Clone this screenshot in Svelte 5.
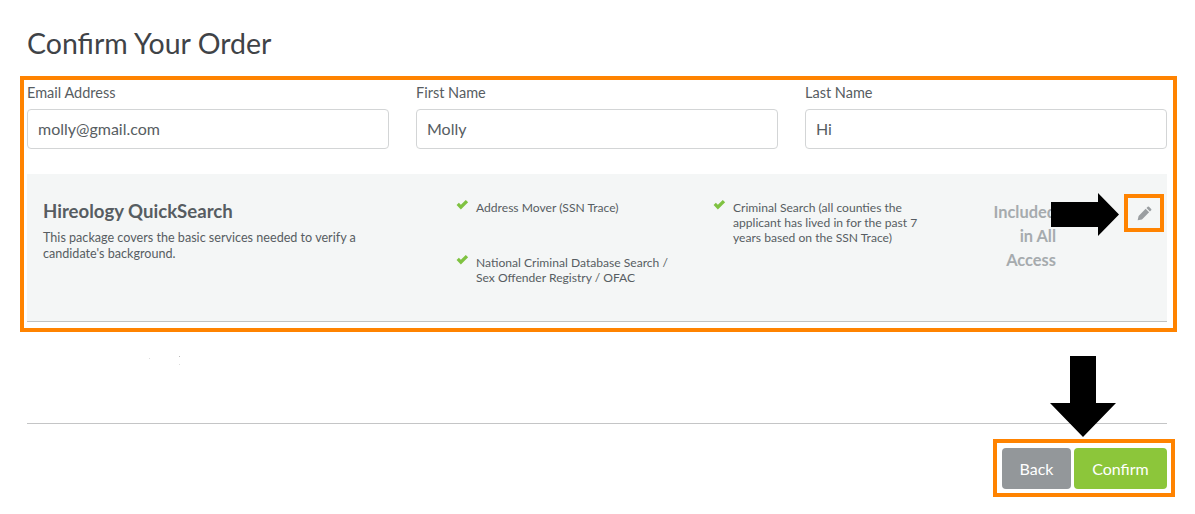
<script>
    let fields = [
        { label: "Email Address", value: "molly@gmail.com" },
        { label: "First Name", value: "Molly" },
        { label: "Last Name", value: "Hi" }
    ]
    let col1 = ["Address Mover (SSN Trace)", "National Criminal Database Search / Sex Offender Registry / OFAC"]
    let col2 = ["Criminal Search (all counties the applicant has lived in for the past 7 years based on the SSN Trace)"]
</script>

{#snippet check()}
    <svg class="check" viewBox="0 0 14 11" width="13" height="10" aria-hidden="true">
        <path d="M0.5 5.4 L3 2.9 L5.2 5.1 L10.6 0 L13.2 2.5 L5.2 10.4 Z" fill="#7fc241" />
    </svg>
{/snippet}

<div class="page">
    <h1>Confirm Your Order</h1>

    <div class="highlight">
        <div class="fields">
            {#each fields as field}
                <label class="field">
                    <span>{field.label}</span>
                    <input type="text" value={field.value} />
                </label>
            {/each}
        </div>

        <div class="package">
            <div class="intro">
                <h2>Hireology QuickSearch</h2>
                <p>This package covers the basic services needed to verify a candidate's background.</p>
            </div>
            <ul class="services first">
                {#each col1 as item}
                    <li>{@render check()}<span>{item}</span></li>
                {/each}
            </ul>
            <ul class="services second">
                {#each col2 as item}
                    <li>{@render check()}<span>{item}</span></li>
                {/each}
            </ul>
            <div class="included">Included in All Access</div>
            <button class="edit" aria-label="Edit">
                <svg viewBox="0 0 16 16" width="15" height="15" aria-hidden="true">
                    <path d="M11.4 0.9 a1 1 0 0 1 1.4 0 l2.3 2.3 a1 1 0 0 1 0 1.4 l-1.3 1.3 -3.7 -3.7 z M9.2 3 l3.7 3.7 -7.6 7.6 -4.6 1 1 -4.6 z" fill="#9a9ea1" />
                </svg>
            </button>
            <svg class="arrow-right" viewBox="0 0 68 43" width="68" height="43" aria-hidden="true">
                <path d="M0 9 H47 V0 L68 21.5 L47 43 V34 H0 Z" fill="#000" />
            </svg>
        </div>
    </div>

    <div class="gap">
        <svg width="200" height="20" aria-hidden="true">
            <rect x="122" y="10" width="1" height="1" fill="#ddd" />
            <rect x="152" y="8" width="1" height="1" fill="#bbb" />
            <rect x="152" y="16" width="1" height="1" fill="#ddd" />
        </svg>
    </div>

    <div class="footer">
        <div class="actions">
            <button class="back">Back</button>
            <button class="confirm">Confirm</button>
        </div>
        <svg class="arrow-down" viewBox="0 0 66 81" width="66" height="81" aria-hidden="true">
            <path d="M20 0 H46 V47 H66 L33 81 L0 47 H20 Z" fill="#000" />
        </svg>
    </div>
</div>

<style>
    :global(body) {
        background: #fff;
        font-family: Lato, "Open Sans", sans-serif;
        color: #575d62;
    }

    .page {
        width: 1140px;
        margin-left: 27px;
    }

    h1 {
        margin: 0;
        padding-top: 26px;
        height: 50px;
        font-size: 28.5px;
        line-height: 34px;
        font-weight: 400;
        color: #3f4347;
    }

    .highlight {
        box-sizing: border-box;
        width: 1157px;
        height: 256px;
        margin-left: -7px;
        border: 4px solid #ff8300;
        padding: 0 6px 0 3px;
    }

    .fields {
        display: grid;
        grid-template-columns: repeat(3, 362px);
        column-gap: 27px;
    }

    .field {
        display: flex;
        flex-direction: column;
    }

    .field span {
        font-size: 14.5px;
        line-height: 18px;
        height: 25px;
        margin-top: 4px;
    }

    .field input {
        box-sizing: border-box;
        height: 40px;
        border: 1px solid #d3d5d6;
        border-radius: 4px;
        padding: 0 10px 2px;
        font-family: inherit;
        font-size: 16px;
        color: #575d62;
        background: #fff;
    }

    .package {
        position: relative;
        box-sizing: border-box;
        display: grid;
        grid-template-columns: 414px 257px 278px 64px 1fr;
        height: 148px;
        margin-top: 25px;
        padding-left: 16px;
        background: #f4f6f6;
        border-bottom: 1px solid #bfc1c2;
    }

    .intro h2 {
        margin: 26px 0 0;
        font-size: 18.6px;
        line-height: 22px;
        font-weight: 700;
        color: #575d62;
    }

    .intro p {
        width: 330px;
        margin: 8px 0 0;
        font-size: 12.6px;
        line-height: 16px;
    }

    .services {
        list-style: none;
        margin: 0;
        padding: 26px 0 0;
        font-size: 12.1px;
        line-height: 15px;
    }

    .services li {
        display: flex;
        align-items: flex-start;
        gap: 7px;
    }

    .first li {
        width: 225px;
        margin-bottom: 40px;
    }

    .second li {
        width: 215px;
    }

    .check {
        flex: none;
        margin-left: -1px;
    }

    .included {
        padding-top: 26px;
        text-align: right;
        font-size: 16.4px;
        line-height: 24px;
        font-weight: 700;
        color: #a6abae;
    }

    .edit {
        box-sizing: border-box;
        position: absolute;
        top: 20px;
        right: 3px;
        display: flex;
        align-items: center;
        justify-content: center;
        width: 40px;
        height: 38px;
        padding: 0;
        border: 4px solid #ff8300;
        background: transparent;
    }

    .arrow-right {
        position: absolute;
        top: 19px;
        left: 1024px;
    }

    .gap {
        box-sizing: border-box;
        height: 92px;
        padding-top: 16px;
        border-bottom: 1px solid #c4c5c6;
    }

    .gap svg {
        display: block;
    }

    .footer {
        position: relative;
        display: flex;
        justify-content: flex-end;
        padding-top: 15px;
    }

    .actions {
        box-sizing: border-box;
        display: flex;
        gap: 3px;
        width: 182px;
        height: 58px;
        margin-right: -8px;
        border: 4px solid #ff8300;
        padding: 5px 4px 4px 5px;
    }

    .actions button {
        height: 41px;
        border: none;
        border-radius: 4px;
        font-family: Lato, sans-serif;
        font-size: 16px;
        color: #fff;
        padding: 0;
    }

    .back {
        width: 69px;
        background: #93979a;
    }

    .confirm {
        width: 93px;
        background: #8cc63a;
    }

    .arrow-down {
        position: absolute;
        top: -68px;
        left: 1023px;
    }
</style>
